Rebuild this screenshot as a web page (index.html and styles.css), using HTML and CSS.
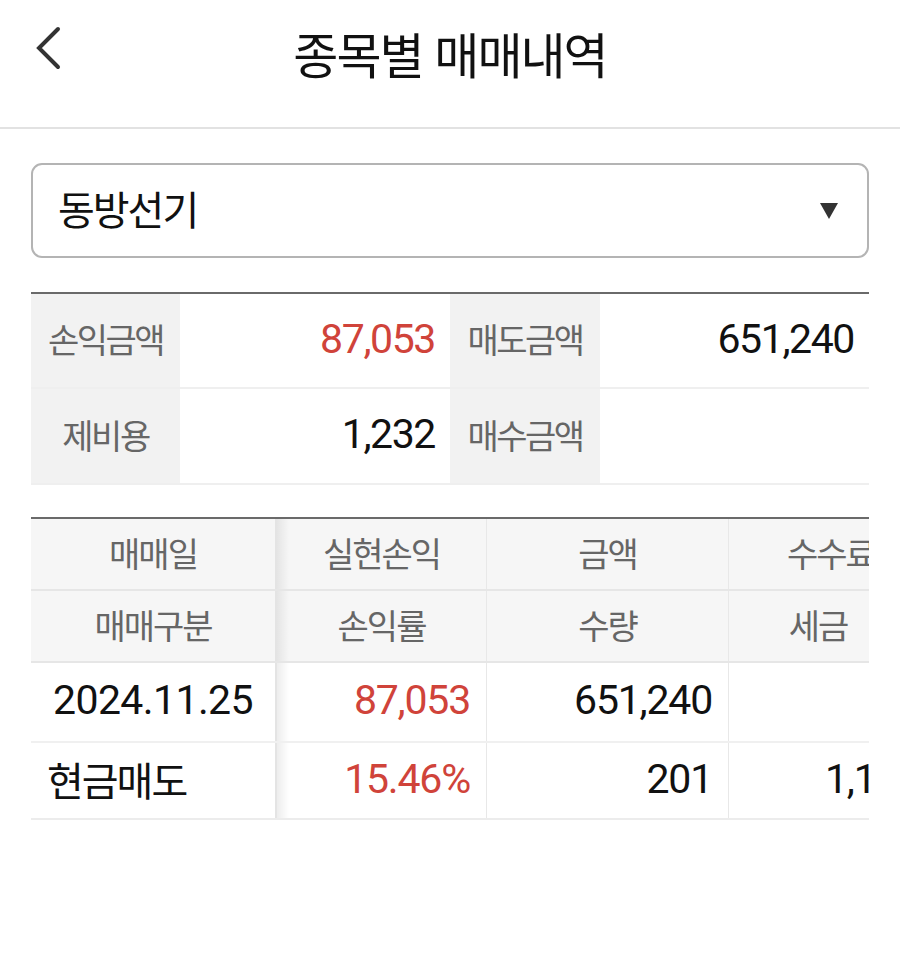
FILE: index.html
```html
<!DOCTYPE html>
<html lang="ko">
<head>
<meta charset="utf-8">
<title>종목별 매매내역</title>
<link rel="stylesheet" href="styles.css">
</head>
<body>
<header class="topbar">
  <button class="back" aria-label="뒤로">
    <svg width="30" height="44" viewBox="0 0 30 44"><path d="M24 3 L5 22 L24 41" fill="none" stroke="#333" stroke-width="4" stroke-linecap="round" stroke-linejoin="miter"/></svg>
  </button>
  <h1 class="title">종목별 매매내역</h1>
</header>
<main class="content">
  <div class="select">
    <span class="select-text">동방선기</span>
    <span class="caret"></span>
  </div>

  <div class="summary">
    <div class="s-row">
      <div class="s-label">손익금액</div>
      <div class="s-value red">87,053</div>
      <div class="s-label">매도금액</div>
      <div class="s-value">651,240</div>
    </div>
    <div class="s-row">
      <div class="s-label">제비용</div>
      <div class="s-value">1,232</div>
      <div class="s-label">매수금액</div>
      <div class="s-value"></div>
    </div>
  </div>

  <div class="trades">
    <div class="t-inner">
      <div class="t-row head">
        <div class="c c1">매매일</div>
        <div class="c c2">실현손익</div>
        <div class="c c3">금액</div>
        <div class="c c4 fee">수수료</div>
      </div>
      <div class="t-row head">
        <div class="c c1">매매구분</div>
        <div class="c c2">손익률</div>
        <div class="c c3">수량</div>
        <div class="c c4">세금</div>
      </div>
      <div class="t-row data">
        <div class="c c1 num date">2024.11.25</div>
        <div class="c c2 num red right">87,053</div>
        <div class="c c3 num right">651,240</div>
        <div class="c c4 num right"></div>
      </div>
      <div class="t-row data last">
        <div class="c c1 kind">현금매도</div>
        <div class="c c2 num red right">15.46%</div>
        <div class="c c3 num right">201</div>
        <div class="c c4 num right clip">1,1</div>
      </div>
    </div>
  </div>
</main>
</body>
</html>
```

FILE: styles.css
```css
* { box-sizing: border-box; }
html, body { margin: 0; padding: 0; background: #fff; }
body {
  width: 900px;
  font-family: "Noto Sans CJK KR", "Noto Sans", sans-serif;
  color: #111;
}

.topbar {
  height: 129px;
  border-bottom: 2px solid #e2e2e2;
  display: flex;
  align-items: flex-start;
  justify-content: center;
  position: relative;
}
.back {
  position: absolute;
  left: 34px;
  top: 26px;
  border: 0;
  background: none;
  padding: 0;
  width: 30px;
  height: 44px;
}
.title {
  margin: 17px 0 0;
  font-size: 49px;
  font-weight: 400;
  letter-spacing: -2px;
  line-height: 72px;
  color: #111;
}

.content { padding: 0 31px; }

.select {
  margin-top: 34px;
  height: 95px;
  border: 2px solid #b4b4b4;
  border-radius: 11px;
  display: flex;
  align-items: center;
  justify-content: space-between;
  padding: 0 29px 0 25px;
}
.select-text {
  font-size: 40px;
  letter-spacing: -2px;
  color: #111;
  padding-bottom: 6px;
}
.caret {
  width: 0; height: 0;
  border-left: 9px solid transparent;
  border-right: 9px solid transparent;
  border-top: 16px solid #333;
}

.summary {
  margin-top: 34px;
  border-top: 2px solid #6a6a6a;
  border-bottom: 2px solid #efefef;
}
.s-row {
  display: grid;
  grid-template-columns: 149px 270px 150px 1fr;
  height: 93px;
}
.s-row + .s-row { border-top: 2px solid #efefef; height: 96px; }
.s-label {
  background: #f2f2f2;
  color: #666;
  font-size: 34px;
  letter-spacing: -2.5px;
  display: flex;
  align-items: center;
  justify-content: center;
  padding-bottom: 4px;
}
.s-value {
  font-family: Roboto, "Noto Sans CJK KR", sans-serif;
  font-size: 41px;
  letter-spacing: -1.4px;
  display: flex;
  align-items: center;
  justify-content: flex-end;
  padding-right: 15px;
  padding-bottom: 4px;
  color: #111;
}
.red { color: #d0433a !important; }

.trades {
  margin-top: 32px;
  overflow: hidden;
  border-top: 2px solid #6a6a6a;
}
.t-inner { width: 876px; }
.t-row {
  display: grid;
  grid-template-columns: 246px 209px 242px 179px;
  border-bottom: 2px solid #e6e6e6;
}
.t-row.head { height: 72px; background: #f6f6f6; }
.t-row.data { height: 80px; border-bottom-color: #f0f0f0; }
.t-row.data.last { height: 77px; border-bottom-color: #ececec; }

.c {
  display: flex;
  align-items: center;
  justify-content: center;
  font-size: 34px;
  letter-spacing: -2px;
  color: #666;
  padding-bottom: 4px;
}
.c1 { border-right: 2px solid #e4e4e4; }
.c2 {
  background-image: linear-gradient(to right, rgba(0,0,0,0.07), rgba(0,0,0,0) 12px);
}
.c3 { border-left: 1px solid #e8e8e8; }
.c4 { border-left: 1px solid #e8e8e8; }
.head .fee { justify-content: flex-start; padding-left: 58px; }

.data .c { color: #111; }
.num {
  font-family: Roboto, "Noto Sans CJK KR", sans-serif;
  font-size: 41px;
  letter-spacing: -1.2px;
}
.right { justify-content: flex-end; padding-right: 16px; }
.date { justify-content: center; letter-spacing: -0.6px; }
.kind {
  justify-content: flex-start;
  padding-left: 16px;
  font-size: 40px;
  letter-spacing: -2px;
}
.clip { justify-content: flex-start; padding-left: 96px; padding-right: 0; }
```
